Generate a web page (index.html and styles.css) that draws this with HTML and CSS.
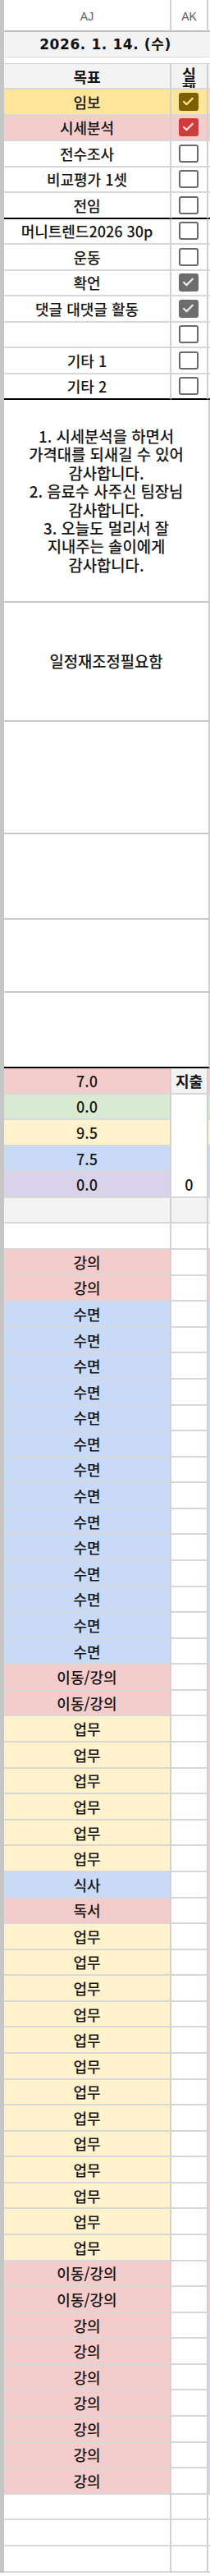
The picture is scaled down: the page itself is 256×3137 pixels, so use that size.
FILE: index.html
```html
<!DOCTYPE html>
<html lang="ko">
<head>
<meta charset="utf-8">
<link rel="stylesheet" href="styles.css">
</head>
<body>
<div class="sheet">
  <div class="grid g-head">
    <div class="c aj colhdr">AJ</div><div class="c ak colhdr">AK</div><div class="c s"></div>
  </div>
  <div class="grid g-date">
    <div class="c wide date">2026. 1. 14. (수)</div><div class="c s gray"></div>
  </div>
  <div class="spacer"></div>
  <div class="grid g-goals">
    <div class="c aj gray bold">목표</div><div class="c ak gray bold top"><span class="wrap">실행</span></div><div class="c s gray"></div>

    <div class="c aj yel">임보</div><div class="c ak yel"><span class="cb on brown"><svg viewBox="0 0 19 17"><path d="M4 8.8l3.4 3.3 7.4-7.4"/></svg></span></div><div class="c s yel"></div>
    <div class="c aj pink">시세분석</div><div class="c ak pink"><span class="cb on red"><svg viewBox="0 0 19 17"><path d="M4 8.8l3.4 3.3 7.4-7.4"/></svg></span></div><div class="c s pink"></div>
    <div class="c aj">전수조사</div><div class="c ak"><span class="cb"></span></div><div class="c s"></div>
    <div class="c aj">비교평가 1셋</div><div class="c ak"><span class="cb"></span></div><div class="c s"></div>
    <div class="c aj thick">전임</div><div class="c ak thick"><span class="cb"></span></div><div class="c s thick"></div>
    <div class="c aj">머니트렌드2026 30p</div><div class="c ak"><span class="cb"></span></div><div class="c s"></div>
    <div class="c aj">운동</div><div class="c ak"><span class="cb"></span></div><div class="c s"></div>
    <div class="c aj">확언</div><div class="c ak"><span class="cb on grayc"><svg viewBox="0 0 19 17"><path d="M4 8.8l3.4 3.3 7.4-7.4"/></svg></span></div><div class="c s"></div>
    <div class="c aj">댓글 대댓글 활동</div><div class="c ak"><span class="cb on grayc"><svg viewBox="0 0 19 17"><path d="M4 8.8l3.4 3.3 7.4-7.4"/></svg></span></div><div class="c s"></div>
    <div class="c aj"></div><div class="c ak"><span class="cb"></span></div><div class="c s"></div>
    <div class="c aj">기타 1</div><div class="c ak"><span class="cb"></span></div><div class="c s"></div>
    <div class="c aj thick">기타 2</div><div class="c ak thick"><span class="cb"></span></div><div class="c s thick"></div>
  </div>

  <div class="notes">
    <div class="note n1"><p>1. 시세분석을 하면서<br>가격대를 되새길 수 있어<br>감사합니다.<br>2. 음료수 사주신 팀장님<br>감사합니다.<br>3. 오늘도 멀리서 잘<br>지내주는 솔이에게<br>감사합니다.</p></div>
    <div class="note n2"><p>일정재조정필요함</p></div>
    <div class="note n3"></div>
    <div class="note n4"></div>
    <div class="note n5"></div>
    <div class="note n6 thick"></div>
  </div>

  <div class="grid g-sched">
    <div class="c aj pink">7.0</div><div class="c ak gray bold">지출</div><div class="c s pink"></div>
    <div class="c aj green">0.0</div><div class="c ak merged">0</div><div class="c s green"></div>
    <div class="c aj lyel">9.5</div><div class="c s lyel"></div>
    <div class="c aj blue">7.5</div><div class="c s blue"></div>
    <div class="c aj purple">0.0</div><div class="c s purple"></div>
    <div class="c aj gray"></div><div class="c ak gray"></div><div class="c s gray"></div>
    <div class="c aj"></div><div class="c ak"></div><div class="c s"></div>

    <div class="c aj pink">강의</div><div class="c ak"></div><div class="c s pink"></div>
    <div class="c aj pink">강의</div><div class="c ak"></div><div class="c s pink"></div>

    <div class="c aj blue">수면</div><div class="c ak"></div><div class="c s blue"></div>
    <div class="c aj blue">수면</div><div class="c ak"></div><div class="c s blue"></div>
    <div class="c aj blue">수면</div><div class="c ak"></div><div class="c s blue"></div>
    <div class="c aj blue">수면</div><div class="c ak"></div><div class="c s blue"></div>
    <div class="c aj blue">수면</div><div class="c ak"></div><div class="c s blue"></div>
    <div class="c aj blue">수면</div><div class="c ak"></div><div class="c s blue"></div>
    <div class="c aj blue">수면</div><div class="c ak"></div><div class="c s blue"></div>
    <div class="c aj blue">수면</div><div class="c ak"></div><div class="c s blue"></div>
    <div class="c aj blue">수면</div><div class="c ak"></div><div class="c s blue"></div>
    <div class="c aj blue">수면</div><div class="c ak"></div><div class="c s blue"></div>
    <div class="c aj blue">수면</div><div class="c ak"></div><div class="c s blue"></div>
    <div class="c aj blue">수면</div><div class="c ak"></div><div class="c s blue"></div>
    <div class="c aj blue">수면</div><div class="c ak"></div><div class="c s blue"></div>
    <div class="c aj blue">수면</div><div class="c ak"></div><div class="c s blue"></div>

    <div class="c aj pink">이동/강의</div><div class="c ak"></div><div class="c s pink"></div>
    <div class="c aj pink">이동/강의</div><div class="c ak"></div><div class="c s pink"></div>

    <div class="c aj lyel">업무</div><div class="c ak"></div><div class="c s pink"></div>
    <div class="c aj lyel">업무</div><div class="c ak"></div><div class="c s pink"></div>
    <div class="c aj lyel">업무</div><div class="c ak"></div><div class="c s pink"></div>
    <div class="c aj lyel">업무</div><div class="c ak"></div><div class="c s pink"></div>
    <div class="c aj lyel">업무</div><div class="c ak"></div><div class="c s pink"></div>
    <div class="c aj lyel">업무</div><div class="c ak"></div><div class="c s pink"></div>

    <div class="c aj blue">식사</div><div class="c ak"></div><div class="c s pink"></div>
    <div class="c aj pink">독서</div><div class="c ak"></div><div class="c s pink"></div>

    <div class="c aj lyel">업무</div><div class="c ak"></div><div class="c s pink"></div>
    <div class="c aj lyel">업무</div><div class="c ak"></div><div class="c s pink"></div>
    <div class="c aj lyel">업무</div><div class="c ak"></div><div class="c s pink"></div>
    <div class="c aj lyel">업무</div><div class="c ak"></div><div class="c s pink"></div>
    <div class="c aj lyel">업무</div><div class="c ak"></div><div class="c s pink"></div>
    <div class="c aj lyel">업무</div><div class="c ak"></div><div class="c s pink"></div>
    <div class="c aj lyel">업무</div><div class="c ak"></div><div class="c s pink"></div>
    <div class="c aj lyel">업무</div><div class="c ak"></div><div class="c s pink"></div>
    <div class="c aj lyel">업무</div><div class="c ak"></div><div class="c s pink"></div>
    <div class="c aj lyel">업무</div><div class="c ak"></div><div class="c s pink"></div>
    <div class="c aj lyel">업무</div><div class="c ak"></div><div class="c s pink"></div>
    <div class="c aj lyel">업무</div><div class="c ak"></div><div class="c s pink"></div>
    <div class="c aj lyel">업무</div><div class="c ak"></div><div class="c s pink"></div>

    <div class="c aj pink">이동/강의</div><div class="c ak"></div><div class="c s pink"></div>
    <div class="c aj pink">이동/강의</div><div class="c ak"></div><div class="c s pink"></div>

    <div class="c aj pink">강의</div><div class="c ak"></div><div class="c s purple"></div>
    <div class="c aj pink">강의</div><div class="c ak"></div><div class="c s purple"></div>
    <div class="c aj pink">강의</div><div class="c ak"></div><div class="c s purple"></div>
    <div class="c aj pink">강의</div><div class="c ak"></div><div class="c s purple"></div>
    <div class="c aj pink">강의</div><div class="c ak"></div><div class="c s purple"></div>
    <div class="c aj pink">강의</div><div class="c ak"></div><div class="c s purple"></div>
    <div class="c aj pink">강의</div><div class="c ak"></div><div class="c s purple"></div>

    <div class="c aj"></div><div class="c ak"></div><div class="c s"></div>
    <div class="c aj"></div><div class="c ak"></div><div class="c s"></div>
    <div class="c aj"></div><div class="c ak"></div><div class="c s"></div>
  </div>
</div>
</body>
</html>
```
FILE: styles.css
```css
html, body {
  margin: 0;
  padding: 0;
  background: #ffffff;
}

.sheet {
  width: 251px;
  border-left: 5px solid #c6c6c6;
  font-family: "Noto Sans CJK KR", "Noto Sans", sans-serif;
  font-size: 18px;
  font-weight: 500;
  color: #141414;
}

.grid {
  display: grid;
  grid-template-columns: 204px 45px 2px;
}

.g-head { grid-auto-rows: 39px; }
.g-date { grid-auto-rows: 31px; }
.g-goals { grid-template-rows: 31px; grid-auto-rows: 31.5px; }
.g-sched { grid-auto-rows: 31.58px; }

.c {
  box-sizing: border-box;
  border-bottom: 2px solid #d8d8d8;
  display: flex;
  align-items: center;
  justify-content: center;
  overflow: hidden;
  white-space: nowrap;
  line-height: 1;
}

.aj, .ak, .wide { border-right: 2px solid #d0d0d0; }
.wide { grid-column: 1 / 3; }

.colhdr {
  font-family: "Liberation Sans", Arial, sans-serif;
  font-size: 14px;
  font-weight: normal;
  color: #5c5c5c;
  border-bottom-color: #bdbdbd;
  padding-top: 2px;
}
.g-head .s { border-bottom-color: #bdbdbd; }

.date {
  background: #f3f3f3;
  font-family: "DejaVu Sans", "Noto Sans CJK KR", sans-serif;
  font-weight: bold;
  font-size: 17px;
  letter-spacing: 0.6px;
  color: #111;
  border-bottom: 1px solid #dedede;
  border-right-color: #f3f3f3;
}
.g-date .s { border-bottom: 1px solid #dedede; }

.spacer {
  height: 8px;
  box-sizing: border-box;
  border-bottom: 1px solid #cfcfcf;
}

.bold { font-weight: bold; }
.top { align-items: flex-start; }
.wrap {
  white-space: normal;
  width: 19px;
  line-height: 20px;
  padding-top: 2px;
  text-align: center;
  text-decoration: underline;
  text-underline-offset: 3px;
}

.thick { border-bottom: 2px solid #000; }

.gray { background: #f3f3f3; }
.yel { background: #ffe599; }
.pink { background: #f4cccc; }
.green { background: #d9ead3; }
.lyel { background: #fff2cc; }
.blue { background: #c9daf8; }
.purple { background: #d9d2e9; }

.cb {
  box-sizing: border-box;
  width: 24px;
  height: 22px;
  border: 2.5px solid #6a6a6a;
  border-radius: 3px;
  background: #fff;
  display: block;
  margin-left: -1px;
}
.cb svg {
  display: block;
  width: 19px;
  height: 17px;
}
.cb path {
  fill: none;
  stroke-width: 2.2;
  stroke-linecap: round;
  stroke-linejoin: round;
}
.cb.brown { background: #7f6000; border-color: #7f6000; }
.cb.brown path { stroke: #ffe599; }
.cb.red { background: #d33b3b; border-color: #d33b3b; }
.cb.red path { stroke: #fde0e0; }
.cb.grayc { background: #6d6d6d; border-color: #6d6d6d; }
.cb.grayc path { stroke: #ececec; }

.notes {
  display: flex;
  flex-direction: column;
}
.note {
  box-sizing: border-box;
  border-right: 2px solid #d0d0d0;
  border-bottom: 2px solid #c8c8c8;
  display: flex;
  align-items: center;
  justify-content: center;
  text-align: center;
}
.note p {
  margin: 0;
  font-size: 18.8px;
  line-height: 22.4px;
  color: #141414;
}
.n1 { height: 247px; }
.n2 { height: 145px; }
.n3 { height: 137px; }
.n4 { height: 104px; }
.n5 { height: 89px; }
.n6 { height: 92px; }
.note.thick { border-bottom: 2px solid #000; }

.merged {
  grid-row: span 4;
  align-items: flex-end;
  padding-bottom: 6px;
  background: #fff;
}
```
